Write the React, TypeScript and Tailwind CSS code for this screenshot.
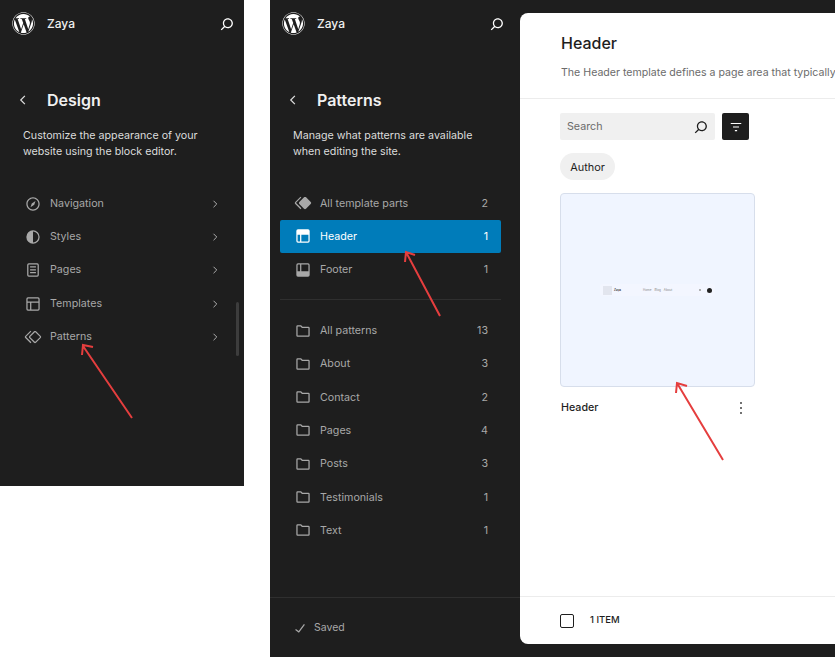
import type { ReactNode } from "react";
import { FaWordpress } from "react-icons/fa";

const PATHS = {
  search:
    "M13 5c-3.3 0-6 2.7-6 6 0 1.4.5 2.7 1.3 3.7l-3.8 3.8 1.1 1.1 3.8-3.8c1 .8 2.3 1.3 3.7 1.3 3.3 0 6-2.7 6-6S16.3 5 13 5zm0 10.5c-2.5 0-4.5-2-4.5-4.5s2-4.5 4.5-4.5 4.5 2 4.5 4.5-2 4.5-4.5 4.5z",
  navigation:
    "M12 4c-4.4 0-8 3.6-8 8s3.6 8 8 8 8-3.6 8-8-3.6-8-8-8zm0 14.5c-3.6 0-6.5-2.9-6.5-6.5S8.4 5.5 12 5.5s6.5 2.9 6.5 6.5-2.9 6.5-6.5 6.5zM9 16l4.5-3L15 8.4l-4.5 3L9 16z",
  styles:
    "M12 4a8 8 0 1 0 0 16 8 8 0 0 0 0-16zm0 14.5V5.5a6.5 6.5 0 0 1 0 13z",
  pages:
    "M15.5 7.5h-7V9h7V7.5zm-7 3.5h7v1.5h-7V11zm7 3.5h-7V16h7v-1.5zM17 4H7a2 2 0 0 0-2 2v12a2 2 0 0 0 2 2h10a2 2 0 0 0 2-2V6a2 2 0 0 0-2-2zm.5 14a.5.5 0 0 1-.5.5H7a.5.5 0 0 1-.5-.5V6a.5.5 0 0 1 .5-.5h10a.5.5 0 0 1 .5.5v12z",
  layout:
    "M18 5.5H6a.5.5 0 00-.5.5v3h13V6a.5.5 0 00-.5-.5zm.5 5H10v8h8a.5.5 0 00.5-.5v-7.5zm-10 0h-3V18a.5.5 0 00.5.5h2.5v-8zM6 4h12a2 2 0 012 2v12a2 2 0 01-2 2H6a2 2 0 01-2-2V6a2 2 0 012-2z",
  symbol:
    "M21.3 10.8l-5.6-5.6c-.7-.7-1.8-.7-2.5 0l-5.6 5.6c-.7.7-.7 1.8 0 2.5l5.6 5.6c.3.3.8.5 1.2.5s.9-.2 1.2-.5l5.6-5.6c.8-.7.8-1.9.1-2.5zm-1 1.4l-5.6 5.6c-.1.1-.3.1-.4 0l-5.6-5.6c-.1-.1-.1-.3 0-.4l5.6-5.6s.1-.1.2-.1.1 0 .2.1l5.6 5.6c.1.1.1.3 0 .4zm-16.6-.4L10 5.5l-1-1-6.3 6.3c-.7.7-.7 1.8 0 2.5L9 19.5l1.1-1.1-6.3-6.3c-.2 0-.2-.2-.1-.3z",
  symbolFilled:
    "M21.3 10.8l-5.6-5.6c-.7-.7-1.8-.7-2.5 0l-5.6 5.6c-.7.7-.7 1.8 0 2.5l5.6 5.6c.3.3.8.5 1.2.5s.9-.2 1.2-.5l5.6-5.6c.8-.7.8-1.9.1-2.5zm-17.6 1L10 5.5l-1-1-6.3 6.3c-.7.7-.7 1.8 0 2.5L9 19.5l1.1-1.1-6.3-6.3c-.2 0-.2-.2-.1-.3z",
  header:
    "M18.5 10.5H10v8h8a.5.5 0 00.5-.5v-7.5zm-10 0h-3V18a.5.5 0 00.5.5h2.5v-8zM6 4h12a2 2 0 012 2v12a2 2 0 01-2 2H6a2 2 0 01-2-2V6a2 2 0 012-2z",
  footer:
    "M18 5.5h-8v8h8.5V6a.5.5 0 00-.5-.5zm-9.5 8h-3V6a.5.5 0 01.5-.5h2.5v8zM6 4h12a2 2 0 012 2v12a2 2 0 01-2 2H6a2 2 0 01-2-2V6a2 2 0 012-2z",
  folder:
    "M4 6.5A1.5 1.5 0 0 1 5.5 5h4.2l1.8 2H18.5A1.5 1.5 0 0 1 20 8.5v9a1.5 1.5 0 0 1-1.5 1.5h-13A1.5 1.5 0 0 1 4 17.5v-11zm1.5 0v11h13v-9h-7.7l-1.8-2H5.5z",
  check: "M16.7 7.1l-6.3 8.5-3.3-2.5-.9 1.2 4.5 3.4L17.9 8z",
  kebab: "M13 19h-2v-2h2v2zm0-6h-2v-2h2v2zm0-6h-2V5h2v2z",
  filter: "M5 6.5h14V8H5V6.5zm3 4.75h8v1.5H8v-1.5zm2.5 4.75h3v1.5h-3V16z",
};

type IconName = keyof typeof PATHS;

function Icon({ name, className }: { name: IconName; className?: string }) {
  return (
    <svg viewBox="0 0 24 24" fill="currentColor" fillRule="evenodd" className={className}>
      <path d={PATHS[name]} />
    </svg>
  );
}

function Chevron({ left, className }: { left?: boolean; className?: string }) {
  return (
    <svg viewBox="0 0 24 24" fill="none" stroke="currentColor" strokeWidth="1.6" className={className}>
      <path d={left ? "M14.5 6.5 9 12l5.5 5.5" : "M9.5 6.5 15 12l-5.5 5.5"} />
    </svg>
  );
}

function Sidebar({
  title,
  description,
  children,
}: {
  title: string;
  description: string[];
  children: ReactNode;
}) {
  return (
    <>
      <div className="flex h-[47px] w-[237px] shrink-0 items-center pl-[12px] text-white">
        <FaWordpress className="h-[23px] w-[23px]" />
        <span className="ml-[12px] flex-1 text-[12px] font-medium text-[#f0f0f0]">Zaya</span>
        <Icon name="search" className="h-[20px] w-[20px]" />
      </div>
      <div className="mt-[39px] flex h-[28px] items-center">
        <Chevron left className="ml-[14px] h-[18px] w-[18px] text-[#e0e0e0]" />
        <h1 className="ml-[15px] text-[16px] font-semibold text-[#f0f0f0]">{title}</h1>
      </div>
      <div className="mt-[14px] px-[23px] text-[10.7px] leading-[16px] text-[#dcdcdc]">
        {description.map((line) => (
          <p key={line} className="whitespace-nowrap">
            {line}
          </p>
        ))}
      </div>
      {children}
    </>
  );
}

function NavRow({
  icon,
  label,
  count,
  active,
}: {
  icon: IconName;
  label: string;
  count?: number;
  active?: boolean;
}) {
  return (
    <div
      className={`flex h-[33.3px] items-center rounded-[2px] px-[13px] text-[10.7px] ${
        active ? "bg-[#007cba] text-white" : "text-[#a8a8a8]"
      }`}
    >
      <Icon name={icon} className="h-[20px] w-[20px] shrink-0" />
      <span className={`ml-[7px] flex-1 ${count !== undefined ? "pt-[1px]" : ""}`}>{label}</span>
      {count !== undefined && <span className="pt-[1px]">{count}</span>}
      {count === undefined && <Chevron className="mr-[-1px] h-[14px] w-[14px] text-[#b8b8b8]" />}
    </div>
  );
}

const DESIGN_ROWS: { icon: IconName; label: string }[] = [
  { icon: "navigation", label: "Navigation" },
  { icon: "styles", label: "Styles" },
  { icon: "pages", label: "Pages" },
  { icon: "layout", label: "Templates" },
  { icon: "symbol", label: "Patterns" },
];

const PATTERN_ROWS = [
  ["All patterns", 13],
  ["About", 3],
  ["Contact", 2],
  ["Pages", 4],
  ["Posts", 3],
  ["Testimonials", 1],
  ["Text", 1],
] as const;

function ThumbnailHeader() {
  return (
    <div className="flex h-[12px] w-[115px] items-center rounded-[3px] bg-[#f3f6ff] px-[3px]">
      <div className="h-[9px] w-[9px] bg-[#e2e5ee]" />
      <span className="ml-[2px] text-[3px] font-semibold text-[#333]">Zaya</span>
      <div className="ml-[22px] flex gap-[3px] text-[3px] text-[#888]">
        <span>Home</span>
        <span>Blog</span>
        <span>About</span>
      </div>
      <div className="ml-auto mr-[6px] h-[2px] w-[2px] rounded-full bg-[#999]" />
      <div className="h-[5px] w-[5px] rounded-full bg-[#222]" />
    </div>
  );
}

function HeaderCard() {
  return (
    <main className="my-[13px] flex min-w-0 flex-1 flex-col overflow-hidden rounded-l-[8px] bg-white">
      <div className="h-[86px] shrink-0 border-b border-[#ececec] pl-[41px] pt-[18px]">
        <h2 className="text-[16px] font-medium leading-[24px] text-[#1e1e1e]">Header</h2>
        <p className="mt-[10px] whitespace-nowrap text-[10.6px] leading-[16px] text-[#6b6b6b]">
          The Header template defines a page area that typically
        </p>
      </div>
      <div className="flex-1 pl-[40px] pt-[14px]">
        <div className="flex items-start gap-[7px]">
          <div className="flex h-[27px] w-[155px] items-center justify-between rounded-[2px] bg-[#f0f0f0] pl-[7px] pr-[4px] text-[10.7px] text-[#6b6b6b]">
            <span className="pt-[1px]">Search</span>
            <Icon name="search" className="h-[20px] w-[20px] text-[#1e1e1e]" />
          </div>
          <div className="flex h-[27px] w-[27px] items-center justify-center rounded-[2px] bg-[#1e1e1e] text-white">
            <Icon name="filter" className="h-[18px] w-[18px]" />
          </div>
        </div>
        <div className="mt-[13px] flex h-[27px] w-[55px] items-center justify-center rounded-full bg-[#f0f0f0] pt-[1px] text-[10.9px] text-[#1e1e1e]">
          Author
        </div>
        <div className="mt-[13px] flex h-[194px] w-[195px] items-center justify-center rounded-[4px] border border-[#d7deeb] bg-[#f0f5ff]">
          <ThumbnailHeader />
        </div>
        <div className="mt-[11px] flex w-[195px] items-center justify-between">
          <span className="pl-[1px] pt-[1px] text-[10.7px] font-medium text-[#1e1e1e]">Header</span>
          <Icon name="kebab" className="mr-[4px] h-[20px] w-[20px] text-[#1e1e1e]" />
        </div>
      </div>
      <div className="flex h-[48px] shrink-0 items-center border-t border-[#ececec] pl-[40px]">
        <div className="h-[14px] w-[14px] rounded-[2px] border border-[#1e1e1e]" />
        <span className="ml-[16px] text-[9.5px] font-medium text-[#1e1e1e]">1 ITEM</span>
      </div>
    </main>
  );
}

export default function App() {
  return (
    <div className="relative flex h-[657px] w-[835px] items-start gap-[26px] overflow-hidden bg-white font-['Inter',sans-serif]">
      <aside className="relative h-[486px] w-[244px] shrink-0 bg-[#1e1e1e]">
        <Sidebar
          title="Design"
          description={["Customize the appearance of your", "website using the block editor."]}
        >
          <div className="mt-[27px] px-[10px]">
            {DESIGN_ROWS.map((row) => (
              <NavRow key={row.label} icon={row.icon} label={row.label} />
            ))}
          </div>
        </Sidebar>
        <div className="absolute left-[236px] top-[302px] h-[54px] w-[3px] rounded-full bg-[#3d3d3d]" />
      </aside>

      <div className="flex h-[657px] min-w-0 flex-1 bg-[#1e1e1e]">
        <aside className="flex w-[250px] shrink-0 flex-col">
          <Sidebar
            title="Patterns"
            description={["Manage what patterns are available", "when editing the site."]}
          >
            <div className="ml-[10px] mr-[19px] mt-[26.5px]">
              <NavRow icon="symbolFilled" label="All template parts" count={2} />
              <NavRow icon="header" label="Header" count={1} active />
              <NavRow icon="footer" label="Footer" count={1} />
            </div>
            <div className="mb-[14px] ml-[10px] mr-[19px] mt-[12.5px] border-t border-[#2f2f2f]" />
            <div className="ml-[10px] mr-[19px]">
              {PATTERN_ROWS.map(([label, count]) => (
                <NavRow key={label} icon="folder" label={label} count={count} />
              ))}
            </div>
            <div className="mt-auto flex h-[60px] items-center border-t border-[#2f2f2f] pl-[20px] text-[10.5px] text-[#a8a8a8]">
              <Icon name="check" className="h-[20px] w-[20px]" />
              <span className="ml-[4px] pt-[1px]">Saved</span>
            </div>
          </Sidebar>
        </aside>
        <HeaderCard />
      </div>

      {/* annotation arrows, placed on the screenshot itself */}
      <svg
        viewBox="0 0 835 657"
        fill="none"
        stroke="#e53e3e"
        strokeWidth="2"
        className="pointer-events-none absolute left-0 top-0 h-[657px] w-[835px]"
      >
        <path d="M132 418 83 346M82 355l1-10 10 2" />
        <path d="M440 316 406 252M405 262l1-10 9 3" />
        <path d="M723 460 677 383M676 393l1-10 10 3" />
      </svg>
    </div>
  );
}
